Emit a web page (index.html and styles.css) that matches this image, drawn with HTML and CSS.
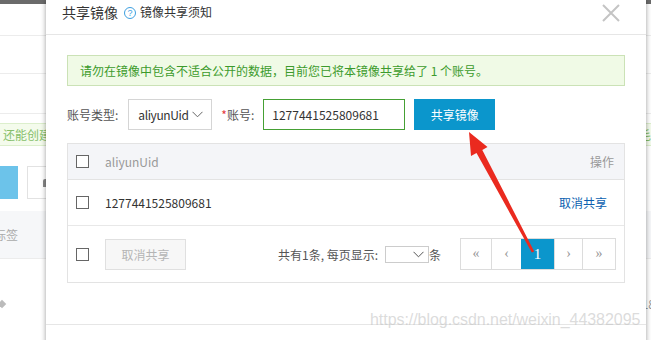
FILE: index.html
```html
<!DOCTYPE html>
<html lang="zh-CN">
<head>
    <meta charset="UTF-8">
    <title>共享镜像</title>
    <link rel="stylesheet" href="styles.css">
</head>
<body>
    <div class="page">
        <div class="page-top"></div>
        <div class="page-row r1"></div>
        <div class="page-row r2"></div>
        <div class="page-row r3"></div>
        <div class="page-tip">还能创建 <span class="tip-right">毛</span></div>
        <div class="page-tools">
            <span class="tool-blue"></span>
            <span class="tool-plain"><span class="tool-icon"></span></span>
        </div>
        <div class="page-band">标签</div>
        <div class="page-foot">
            <span class="diamond"></span>
            <span class="foot-num">18</span>
        </div>
    </div>

    <div class="modal">
        <div class="modal-head">
            <span class="modal-title">共享镜像</span>
            <span class="help">?</span>
            <a class="help-link">镜像共享须知</a>
            <svg class="close" width="18" height="18" viewBox="0 0 18 18">
                <path d="M1 1 L17 17 M17 1 L1 17" stroke="#c4c4c4" stroke-width="2" fill="none"/>
            </svg>
        </div>

        <div class="modal-body">
            <div class="alert">请勿在镜像中包含不适合公开的数据，目前您已将本镜像共享给了 1 个账号。</div>

            <div class="form-row">
                <label class="label">账号类型:</label>
                <div class="select">
                    <span class="select-text">aliyunUid</span>
                    <svg width="11" height="7" viewBox="0 0 11 7"><path d="M0.5 0.8 L5.5 5.8 L10.5 0.8" stroke="#666" fill="none"/></svg>
                </div>
                <label class="label req"><span class="star">*</span>账号:</label>
                <input class="input" type="text" value="1277441525809681">
                <button class="btn-primary">共享镜像</button>
            </div>

            <div class="table">
                <div class="tr th">
                    <span class="check"></span>
                    <span class="cell-main">aliyunUid</span>
                    <span class="cell-op">操作</span>
                </div>
                <div class="tr td">
                    <span class="check"></span>
                    <span class="cell-main">1277441525809681</span>
                    <a class="cell-link">取消共享</a>
                </div>
                <div class="tr tf">
                    <span class="check"></span>
                    <button class="btn-disabled">取消共享</button>
                    <div class="summary">
                        共有1条, 每页显示:
                        <span class="mini-select">
                            <svg width="11" height="7" viewBox="0 0 11 7"><path d="M0.5 0.8 L5.5 5.8 L10.5 0.8" stroke="#555" fill="none"/></svg>
                        </span>条
                    </div>
                    <div class="pager">
                        <span class="pg w30">«</span>
                        <span class="pg w29">‹</span>
                        <span class="pg w33 active">1</span>
                        <span class="pg w27">›</span>
                        <span class="pg w32">»</span>
                    </div>
                </div>
            </div>
        </div>
        <div class="modal-foot"></div>
    </div>

    <div class="watermark">https://blog.csdn.net/weixin_44382095</div>

    <svg class="arrow" width="651" height="340" viewBox="0 0 651 340">
        <polygon points="469,132 487.5,147 482.3,150 534.2,251.4 531.8,252.6 476.5,153 471,156" fill="#ea2a1f"/>
    </svg>
</body>
</html>
```

FILE: styles.css
```css
body {
    margin: 0;
    width: 651px;
    height: 340px;
    overflow: hidden;
    position: relative;
    background: #fff;
    color: #333;
    font-family: "Noto Sans CJK SC", "Noto Sans", sans-serif;
    font-size: 12px;
}

/* page behind the dialog */
.page {
    display: flex;
    flex-direction: column;
    height: 340px;
}
.page-top {
    height: 4px;
    background: #6b6b6b;
}
.page-row {
    border-bottom: 1px solid #ececec;
}
.r1 { height: 31px; }
.r2 { height: 37px; }
.r3 { height: 39px; }
.page-tip {
    margin-top: 9px;
    height: 21px;
    background: #f4fbec;
    border-top: 1px solid #dcefcc;
    border-bottom: 1px solid #dcefcc;
    color: #86bf6a;
    line-height: 21px;
    padding-left: 3px;
    display: flex;
}
.tip-right {
    margin-left: auto;
}
.page-tools {
    margin-top: 20px;
    height: 33px;
    display: flex;
    gap: 9px;
}
.tool-blue {
    width: 18px;
    background: #6cc3ea;
}
.tool-plain {
    width: 40px;
    border: 1px solid #e2e2e2;
    display: flex;
    align-items: center;
    padding-left: 15px;
}
.tool-icon {
    width: 5px;
    height: 8px;
    background: #888;
    border-radius: 2px 2px 0 0;
}
.page-band {
    margin-top: 12px;
    height: 48px;
    box-sizing: border-box;
    background: #f6f7f9;
    border-bottom: 1px solid #ececec;
    color: #aaa;
    padding-top: 15px;
    text-indent: -6px;
    line-height: 17px;
}
.page-foot {
    margin-top: 36px;
    display: flex;
    align-items: center;
    justify-content: space-between;
}
.diamond {
    width: 6px;
    height: 6px;
    background: #bbb;
    transform: rotate(45deg);
    margin-left: -1px;
}
.foot-num {
    color: #999;
    margin-right: -4px;
}

/* dialog */
.modal {
    position: absolute;
    left: 46px;
    top: 0;
    width: 600px;
    height: 360px;
    background: #fff;
    box-shadow: 0 0 5px rgba(0, 0, 0, 0.4);
}
.modal-head {
    height: 35px;
    border-bottom: 1px solid #e6e6e6;
    display: flex;
    align-items: flex-start;
    padding: 3px 16px 0 16px;
    box-sizing: border-box;
    line-height: 18px;
}
.modal-title {
    font-size: 14px;
    color: #333;
}
.help {
    width: 10px;
    height: 10px;
    border: 1px solid #3d9fe0;
    border-radius: 50%;
    color: #3d9fe0;
    font-size: 9px;
    line-height: 10px;
    text-align: center;
    margin: 4px 4px 0 6px;
    font-family: "Liberation Sans", sans-serif;
}
.help-link {
    color: #333;
    font-size: 12px;
}
.close {
    margin-left: auto;
    margin-top: 1px;
    margin-right: 10px;
}

.modal-body {
    padding: 20px 21px 41px 21px;
    border-bottom: 1px solid #e6e6e6;
}
.alert {
    height: 31px;
    box-sizing: border-box;
    background: #f0fae6;
    border: 1px solid #cbe2b6;
    color: #3c9a2c;
    line-height: 29px;
    padding-left: 12px;
}
.form-row {
    margin-top: 13px;
    height: 31px;
    display: flex;
    align-items: center;
}
.label {
    color: #555;
    margin-right: 10px;
}
.req {
    margin-left: 9px;
    margin-right: 9px;
}
.star {
    color: #e4393c;
}
.select {
    width: 84px;
    height: 31px;
    box-sizing: border-box;
    border: 1px solid #d5d5d5;
    display: flex;
    align-items: center;
    justify-content: space-between;
    padding: 0 8px 0 9px;
    color: #333;
}
.select-text {
    letter-spacing: -0.4px;
}
.input {
    width: 142px;
    height: 31px;
    box-sizing: border-box;
    border: 1px solid #45a034;
    padding: 0 8px;
    font-family: "Noto Sans CJK SC", sans-serif;
    font-size: 12px;
    color: #333;
    outline: none;
}
.btn-primary {
    margin-left: 9px;
    width: 81px;
    height: 31px;
    border: none;
    background: #0b96cc;
    color: #fff;
    font-family: "Noto Sans CJK SC", sans-serif;
    font-size: 12px;
    padding: 0;
}

.table {
    margin-top: 13px;
    border: 1px solid #e3e3e3;
}
.tr {
    display: flex;
    align-items: center;
    padding: 0 10px 0 8px;
}
.th {
    height: 35px;
    background: #f4f5f8;
    border-bottom: 1px solid #e3e3e3;
    color: #999;
}
.td {
    height: 45px;
    border-bottom: 1px solid #e8e8e8;
    padding-right: 17px;
}
.tf {
    height: 56px;
    padding-right: 8px;
}
.check {
    width: 13px;
    height: 13px;
    box-sizing: border-box;
    border: 1px solid #666;
    background: #fff;
    margin-right: 16px;
}
.cell-main {
    flex: 1;
}
.cell-op {
    color: #999;
}
.cell-link {
    color: #0b5fb0;
}
.btn-disabled {
    width: 81px;
    height: 31px;
    background: #f7f7f7;
    border: 1px solid #e0e0e0;
    color: #b5b5b5;
    font-family: "Noto Sans CJK SC", sans-serif;
    font-size: 12px;
    padding: 0;
}
.summary {
    margin-left: 92px;
    display: flex;
    align-items: center;
    color: #555;
}
.mini-select {
    width: 44px;
    height: 17px;
    box-sizing: border-box;
    border: 1px solid #ccc;
    margin-left: 7px;
    display: flex;
    align-items: center;
    justify-content: flex-end;
    padding-right: 4px;
}
.pager {
    margin-left: auto;
    display: flex;
    border: 1px solid #dcdcdc;
    height: 32px;
    box-sizing: border-box;
}
.pg {
    display: flex;
    align-items: center;
    justify-content: center;
    border-left: 1px solid #dcdcdc;
    color: #999;
    font-family: "Liberation Serif", serif;
    font-size: 14px;
}
.pg:first-child {
    border-left: none;
}
.w30 { width: 30px; }
.w29 { width: 29px; }
.w33 { width: 33px; }
.w27 { width: 27px; }
.w32 { width: 32px; }
.active {
    background: #0b96cc;
    color: #fff;
    border-left: none;
    font-size: 15px;
}

.watermark {
    position: absolute;
    left: 370px;
    top: 311px;
    font-family: "Liberation Sans", sans-serif;
    font-size: 16px;
    color: rgba(190, 190, 190, 0.55);
    letter-spacing: -0.05px;
}
.arrow {
    position: absolute;
    left: 0;
    top: 0;
}
```
